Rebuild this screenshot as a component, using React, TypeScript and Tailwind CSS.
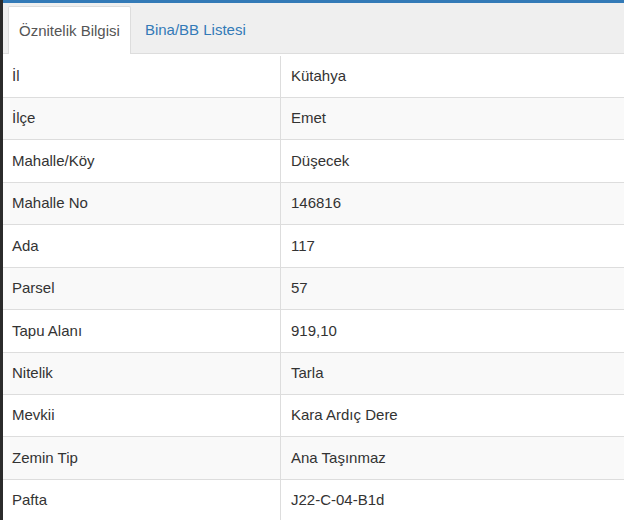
import React from 'react';

const rows: [string, string][] = [
  ['İl', 'Kütahya'],
  ['İlçe', 'Emet'],
  ['Mahalle/Köy', 'Düşecek'],
  ['Mahalle No', '146816'],
  ['Ada', '117'],
  ['Parsel', '57'],
  ['Tapu Alanı', '919,10'],
  ['Nitelik', 'Tarla'],
  ['Mevkii', 'Kara Ardıç Dere'],
  ['Zemin Tip', 'Ana Taşınmaz'],
  ['Pafta', 'J22-C-04-B1d'],
];

export default function App() {
  return (
    <div
      className="flex w-[624px] h-[520px] overflow-hidden bg-white text-[15px] text-[#333]"
      style={{ fontFamily: '"Liberation Sans", Arial, sans-serif' }}
    >
      <div className="w-[3px] shrink-0 bg-[#2b2b2b]" />
      <div className="flex-1 flex flex-col min-w-0">
        <div className="h-[3px] shrink-0 bg-[#337ab7]" />

        {/* tabs */}
        <div className="flex shrink-0 items-end h-[51px] bg-[#efefef] border-b border-[#ddd] pl-[5px]">
          <div className="flex items-center pt-[2px] h-[48px] -mb-px px-[10px] bg-white border border-b-0 border-[#ddd] rounded-t-[2px] text-[#555]">
            Öznitelik Bilgisi
          </div>
          <div className="flex items-center pt-[2px] h-[47px] ml-[4px] px-[10px] text-[#337ab7]">
            Bina/BB Listesi
          </div>
        </div>

        {/* attributes */}
        <div className="flex flex-col shrink-0 mt-[1.5px]">
          {rows.map(([label, value], i) => (
            <div
              key={label}
              className={`flex shrink-0 h-[42.44px] border-b border-[#ddd] ${i % 2 === 1 ? 'bg-[#f9f9f9]' : 'bg-white'}`}
            >
              <div className="w-[277px] shrink-0 flex items-center pl-[9px]">{label}</div>
              <div className="flex-1 flex items-center pl-[10px] border-l border-[#ddd]">{value}</div>
            </div>
          ))}
        </div>
      </div>
    </div>
  );
}
